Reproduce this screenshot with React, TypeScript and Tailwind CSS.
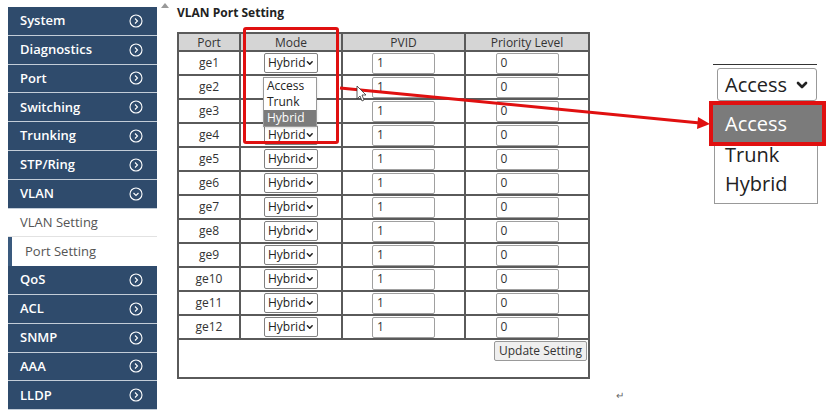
import { ChevronDown } from "lucide-react";

const menu = ["System", "Diagnostics", "Port", "Switching", "Trunking", "STP/Ring"];
const menu2 = ["QoS", "ACL", "SNMP", "AAA", "LLDP"];
const ports = Array.from({ length: 12 }, (_, i) => `ge${i + 1}`);

function CircleChevron({ down }: { down?: boolean }) {
  return (
    <svg width="14" height="14" viewBox="0 0 14 14" fill="none" stroke="white" strokeWidth="1.1">
      <circle cx="7" cy="7" r="6" />
      {down ? <path d="M4.5 6 L7 8.5 L9.5 6" /> : <path d="M6 4.5 L8.5 7 L6 9.5" />}
    </svg>
  );
}

function NavItem({ label, down }: { label: string; down?: boolean }) {
  return (
    <div className="h-[28.8px] flex items-center justify-between pl-[12px] pr-[14px] bg-[#2f4b6c] border-b border-[#c3cdd8] text-white text-[13px] font-semibold">
      <span>{label}</span>
      <CircleChevron down={down} />
    </div>
  );
}

function ModeSelect({ value = "Hybrid" }: { value?: string }) {
  return (
    <div className="mx-auto w-[54px] h-[20px] border border-[#808080] rounded-[2px] bg-white flex items-center justify-between pl-[3px] pr-[2px] text-[12px] text-[#222]">
      <span>{value}</span>
      <ChevronDown size={10} strokeWidth={4} />
    </div>
  );
}

function Field({ v }: { v: string }) {
  return (
    <div className="mx-auto w-[63px] h-[21px] border border-[#a0a0a0] rounded-[2px] bg-white flex items-center pl-[4px] text-[12px] text-[#333]">
      {v}
    </div>
  );
}

export default function App() {
  return (
    <div className="relative w-[831px] h-[412px] bg-white overflow-hidden" style={{ fontFamily: '"Open Sans", "Noto Sans", sans-serif' }}>
      <div className="flex">
        <div className="ml-[8px] mt-[7px] w-[149px] shrink-0">
          {menu.map((m) => (
            <NavItem key={m} label={m} />
          ))}
          <NavItem label="VLAN" down />
          <div className="h-[28.8px] flex items-center pl-[12px] bg-white border-b border-[#e2e2e2] text-[13px] text-[#555]">VLAN Setting</div>
          <div className="h-[28.8px] flex items-center bg-white text-[13px] text-[#555]">
            <div className="w-[4px] h-full bg-[#3a5a7e]" />
            <span className="pl-[13px]">Port Setting</span>
          </div>
          {menu2.map((m) => (
            <NavItem key={m} label={m} />
          ))}
        </div>

        <div className="ml-[4px] mt-[3px] w-[8px] flex justify-center">
          <div className="w-0 h-0 border-l-[4px] border-r-[4px] border-b-[5px] border-l-transparent border-r-transparent border-b-[#999]" />
        </div>

        <div className="ml-[8px] mt-[5px]">
          <div className="text-[12px] font-bold text-[#222] h-[20px] leading-[16px]">VLAN Port Setting</div>
          <table className="mt-[7px] border-collapse border-2 border-[#5a5a5a] text-[12px] text-[#333]">
            <thead>
              <tr className="bg-[#d5d5d5] h-[18px]">
                <th className="w-[62px] border-2 border-[#5a5a5a] font-normal leading-[15px]">Port</th>
                <th className="w-[102px] border-2 border-[#5a5a5a] font-normal leading-[15px]">Mode</th>
                <th className="w-[123px] border-2 border-[#5a5a5a] font-normal leading-[15px]">PVID</th>
                <th className="w-[124px] border-2 border-[#5a5a5a] font-normal leading-[15px]">Priority Level</th>
              </tr>
            </thead>
            <tbody>
              {ports.map((p, i) => (
                <tr key={p} className="h-[24px]">
                  <td className="border-2 border-[#5a5a5a] text-center">{p}</td>
                  <td className="border-2 border-[#5a5a5a]">
                    {i === 1 || i === 2 ? <div className="h-[20px]" /> : <ModeSelect />}
                  </td>
                  <td className="border-2 border-[#5a5a5a]">
                    <Field v="1" />
                  </td>
                  <td className="border-2 border-[#5a5a5a]">
                    <Field v="0" />
                  </td>
                </tr>
              ))}
              <tr className="h-[39px]">
                <td colSpan={4} className="border-2 border-[#5a5a5a] align-top text-right pt-[1px] pr-[1px]">
                  <button className="h-[20px] px-[4px] border border-[#999] rounded-[2px] bg-[#efefef] text-[12px] text-[#333]">Update Setting</button>
                </td>
              </tr>
            </tbody>
          </table>
        </div>
      </div>

      {/* open dropdown */}
      <div className="absolute left-[263px] top-[77px] w-[54px] bg-white border border-[#999] shadow-sm text-[12px] text-[#222]">
        <div className="h-[16px] leading-[16px] pl-[3px]">Access</div>
        <div className="h-[16px] leading-[16px] pl-[3px]">Trunk</div>
        <div className="h-[16px] leading-[16px] pl-[3px] bg-[#7b7b7b] text-white">Hybrid</div>
      </div>

      {/* highlight box */}
      <div className="absolute left-[243px] top-[27px] w-[96px] h-[117px] border-[3px] border-[#e01010] rounded-[3px]" />

      {/* arrow */}
      <svg className="absolute left-0 top-0 pointer-events-none" width="831" height="412">
        <line x1="340" y1="88" x2="700" y2="123" stroke="#e01010" strokeWidth="3" />
        <polygon points="710,124 698,117 697,129" fill="#e01010" />
        <path d="M357 86 L357 99 L360 96 L362 101 L364 100 L362 95 L366 95 Z" fill="white" stroke="#333" strokeWidth="0.8" />
      </svg>

      {/* zoomed callout */}
      <div className="absolute left-[713px] top-[64px] w-[104px] h-[1px] bg-[#333]" />
      <div className="absolute left-[717px] top-[68px] w-[100px] h-[33px] border border-[#999] rounded-[3px] bg-white flex items-center justify-between pl-[7px] pr-[6px] text-[20px] text-[#222]">
        <span>Access</span>
        <ChevronDown size={16} strokeWidth={4} />
      </div>
      <div className="absolute left-[714px] top-[104px] w-[104px] h-[100px] bg-white border border-[#999] text-[20px] text-[#222]">
        <div className="h-[35px]" />
        <div className="h-[29px] leading-[29px] pl-[10px]">Trunk</div>
        <div className="h-[29px] leading-[29px] pl-[10px]">Hybrid</div>
      </div>
      <div className="absolute left-[709px] top-[101px] w-[117px] h-[45px] border-[4px] border-[#e01010] bg-[#7b7b7b] flex items-center pl-[12px] text-[20px] text-white">
        Access
      </div>

      <div className="absolute left-[616px] top-[388px] text-[10px] text-[#666]">↵</div>
    </div>
  );
}
